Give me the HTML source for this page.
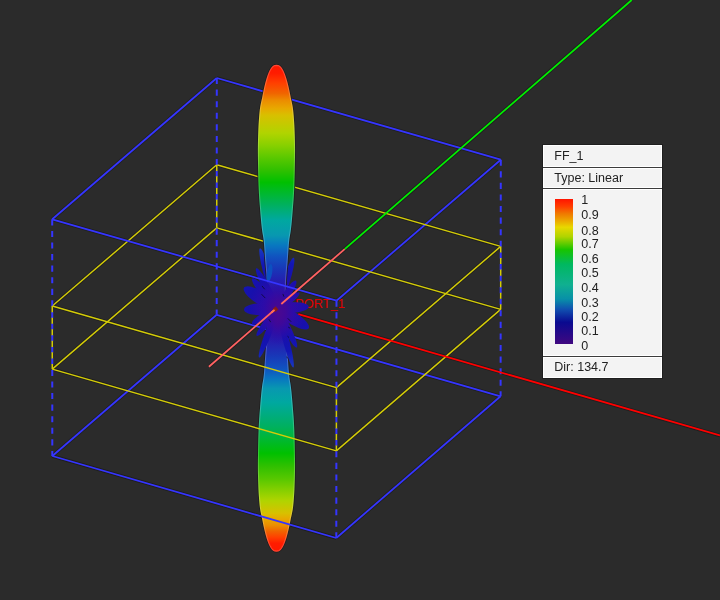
<!DOCTYPE html>
<html><head><meta charset="utf-8"><style>
html,body{margin:0;padding:0;width:720px;height:600px;overflow:hidden;background:#2b2b2b;}
body{position:relative;font-family:"Liberation Sans",sans-serif;}
#lg{position:absolute;left:0;top:0;width:720px;height:600px;will-change:transform;}
.ob{position:absolute;left:542px;top:144px;width:121px;height:235px;background:#1e1e1e;}
.sec{position:absolute;left:543px;width:117px;background:#f3f3f3;border:1px solid #ffffff;}
.sep{position:absolute;left:543px;width:119px;height:1px;background:#3c3c3c;}
.t{position:absolute;left:554.3px;font-size:12.5px;color:#222;line-height:14px;white-space:nowrap;}
.bar{position:absolute;left:554.5px;top:198.7px;width:18px;height:145.3px;background:linear-gradient(to bottom,#ff1400 0%,#ff3c00 5%,#f07800 10%,#eca800 15%,#e8d800 19.5%,#b0d400 26%,#18c400 35%,#00b860 45%,#10b090 59%,#0890a8 69%,#1050b0 76%,#0a0a90 85%,#400880 100%);}
.lb{position:absolute;left:581.3px;font-size:12.5px;color:#222;line-height:14px;}
</style></head><body>
<svg width="720" height="600" viewBox="0 0 720 600" style="position:absolute;left:0;top:0">
<defs>
<linearGradient id="gu" gradientUnits="userSpaceOnUse" x1="0" y1="64.95" x2="0" y2="308.25"><stop offset="0.0000" stop-color="#ff1800"/><stop offset="0.0341" stop-color="#ff1c00"/><stop offset="0.0752" stop-color="#ff4000"/><stop offset="0.1163" stop-color="#f06400"/><stop offset="0.1451" stop-color="#ec8c00"/><stop offset="0.1780" stop-color="#e8a800"/><stop offset="0.2067" stop-color="#d8c000"/><stop offset="0.2807" stop-color="#b0d400"/><stop offset="0.3300" stop-color="#88d000"/><stop offset="0.3835" stop-color="#58c800"/><stop offset="0.4328" stop-color="#30c000"/><stop offset="0.4821" stop-color="#00c000"/><stop offset="0.5767" stop-color="#00b060"/><stop offset="0.6383" stop-color="#00a8a0"/><stop offset="0.7000" stop-color="#0898b0"/><stop offset="0.7411" stop-color="#0878c0"/><stop offset="0.7863" stop-color="#1054c0"/><stop offset="0.8356" stop-color="#1838b8"/><stop offset="0.8849" stop-color="#2420b0"/><stop offset="0.9383" stop-color="#3210a0"/><stop offset="1.0000" stop-color="#4a0890"/></linearGradient>
<linearGradient id="gd" gradientUnits="userSpaceOnUse" x1="0" y1="551.55" x2="0" y2="308.25"><stop offset="0.0000" stop-color="#ff1800"/><stop offset="0.0341" stop-color="#ff1c00"/><stop offset="0.0588" stop-color="#ff4000"/><stop offset="0.0834" stop-color="#f06400"/><stop offset="0.1070" stop-color="#ec8c00"/><stop offset="0.1339" stop-color="#e8a800"/><stop offset="0.1574" stop-color="#d8c000"/><stop offset="0.2089" stop-color="#b0d400"/><stop offset="0.2493" stop-color="#88d000"/><stop offset="0.2979" stop-color="#58c800"/><stop offset="0.3502" stop-color="#30c000"/><stop offset="0.4040" stop-color="#00c000"/><stop offset="0.5150" stop-color="#00b060"/><stop offset="0.6130" stop-color="#00a8a0"/><stop offset="0.6701" stop-color="#0898b0"/><stop offset="0.7081" stop-color="#0878c0"/><stop offset="0.7499" stop-color="#1054c0"/><stop offset="0.8027" stop-color="#1838b8"/><stop offset="0.8570" stop-color="#2420b0"/><stop offset="0.9199" stop-color="#3210a0"/><stop offset="1.0000" stop-color="#4a0890"/></linearGradient>
<radialGradient id="pg" gradientUnits="userSpaceOnUse" cx="279" cy="307" r="60">
<stop offset="0" stop-color="#4a0890"/><stop offset="0.15" stop-color="#3a08a0"/><stop offset="0.3" stop-color="#2a0ca8"/><stop offset="0.5" stop-color="#1810ac"/><stop offset="0.75" stop-color="#1216b4"/><stop offset="1" stop-color="#1834c0"/>
</radialGradient>
<radialGradient id="pc" cx="0.5" cy="0.5" r="0.5">
<stop offset="0" stop-color="#4a0890" stop-opacity="1"/><stop offset="0.35" stop-color="#400898" stop-opacity="0.95"/><stop offset="0.7" stop-color="#2c0ca8" stop-opacity="0.6"/><stop offset="1" stop-color="#2010b0" stop-opacity="0"/>
</radialGradient>
</defs>
<rect width="720" height="600" fill="#2b2b2b"/>
<line x1="216.80" y1="78.00" x2="500.80" y2="159.70" stroke="#1e1e1e" stroke-width="3.4000000000000004"/><line x1="216.70" y1="314.80" x2="500.60" y2="396.30" stroke="#1e1e1e" stroke-width="3.4000000000000004"/><line x1="216.80" y1="78.00" x2="52.20" y2="219.30" stroke="#1e1e1e" stroke-width="3.4000000000000004"/><line x1="500.80" y1="159.70" x2="336.50" y2="300.70" stroke="#1e1e1e" stroke-width="3.4000000000000004"/><line x1="216.70" y1="314.80" x2="52.30" y2="456.00" stroke="#1e1e1e" stroke-width="3.4000000000000004"/><line x1="500.60" y1="396.30" x2="336.30" y2="538.00" stroke="#1e1e1e" stroke-width="3.4000000000000004"/><line x1="216.76" y1="164.79" x2="500.73" y2="246.41" stroke="#1e1e1e" stroke-width="3.05"/><line x1="216.74" y1="227.85" x2="500.67" y2="309.42" stroke="#1e1e1e" stroke-width="3.05"/><line x1="216.76" y1="164.79" x2="52.24" y2="306.05" stroke="#1e1e1e" stroke-width="3.05"/><line x1="500.73" y1="246.41" x2="336.43" y2="387.67" stroke="#1e1e1e" stroke-width="3.05"/><line x1="216.74" y1="227.85" x2="52.26" y2="369.08" stroke="#1e1e1e" stroke-width="3.05"/><line x1="500.67" y1="309.42" x2="336.37" y2="450.86" stroke="#1e1e1e" stroke-width="3.05"/><line x1="298.30" y1="314.20" x2="720.00" y2="435.50" stroke="#1e1e1e" stroke-width="3.4000000000000004"/><line x1="344.70" y1="249.10" x2="631.70" y2="0.00" stroke="#1e1e1e" stroke-width="3.4000000000000004"/><line x1="52.20" y1="219.30" x2="336.50" y2="300.70" stroke="#1e1e1e" stroke-width="3.4000000000000004"/><line x1="52.30" y1="456.00" x2="336.30" y2="538.00" stroke="#1e1e1e" stroke-width="3.4000000000000004"/><line x1="52.24" y1="306.05" x2="336.43" y2="387.67" stroke="#1e1e1e" stroke-width="3.05"/><line x1="52.26" y1="369.08" x2="336.37" y2="450.86" stroke="#1e1e1e" stroke-width="3.05"/><line x1="208.90" y1="366.70" x2="275.50" y2="309.00" stroke="#1e1e1e" stroke-width="3.4000000000000004"/><line x1="281.30" y1="304.00" x2="344.70" y2="249.10" stroke="#1e1e1e" stroke-width="3.4000000000000004"/><line x1="271.50" y1="312.50" x2="274.50" y2="309.90" stroke="#1e1e1e" stroke-width="3.4000000000000004"/><line x1="216.80" y1="78.00" x2="500.80" y2="159.70" stroke="#3535ff" stroke-width="1.8" /><line x1="216.70" y1="314.80" x2="500.60" y2="396.30" stroke="#3535ff" stroke-width="1.8" /><line x1="216.80" y1="78.00" x2="52.20" y2="219.30" stroke="#3535ff" stroke-width="1.8" /><line x1="500.80" y1="159.70" x2="336.50" y2="300.70" stroke="#3535ff" stroke-width="1.8" /><line x1="216.70" y1="314.80" x2="52.30" y2="456.00" stroke="#3535ff" stroke-width="1.8" /><line x1="500.60" y1="396.30" x2="336.30" y2="538.00" stroke="#3535ff" stroke-width="1.8" /><line x1="216.76" y1="164.79" x2="500.73" y2="246.41" stroke="#d4cc08" stroke-width="1.45" /><line x1="216.74" y1="227.85" x2="500.67" y2="309.42" stroke="#d4cc08" stroke-width="1.45" /><line x1="216.76" y1="164.79" x2="52.24" y2="306.05" stroke="#d4cc08" stroke-width="1.45" /><line x1="500.73" y1="246.41" x2="336.43" y2="387.67" stroke="#d4cc08" stroke-width="1.45" /><line x1="216.74" y1="227.85" x2="52.26" y2="369.08" stroke="#d4cc08" stroke-width="1.45" /><line x1="500.67" y1="309.42" x2="336.37" y2="450.86" stroke="#d4cc08" stroke-width="1.45" /><line x1="216.80" y1="78.00" x2="216.70" y2="314.80" stroke="#3535ff" stroke-width="2" stroke-dasharray="6.1 5.48"/><line x1="500.80" y1="159.70" x2="500.60" y2="396.30" stroke="#3535ff" stroke-width="2" stroke-dasharray="6.1 5.48"/><line x1="336.50" y1="300.70" x2="336.30" y2="538.00" stroke="#3535ff" stroke-width="2" stroke-dasharray="6.1 5.48"/><line x1="52.20" y1="219.30" x2="52.30" y2="456.00" stroke="#3535ff" stroke-width="2" stroke-dasharray="6.1 5.48"/><line x1="216.76" y1="164.79" x2="216.74" y2="227.85" stroke="#d4cc08" stroke-width="1.5" stroke-dasharray="6.1 5.48"/><line x1="500.73" y1="246.41" x2="500.67" y2="309.42" stroke="#d4cc08" stroke-width="1.5" stroke-dasharray="6.1 5.48"/><line x1="336.43" y1="387.67" x2="336.37" y2="450.86" stroke="#d4cc08" stroke-width="1.5" stroke-dasharray="6.1 5.48"/><line x1="52.24" y1="306.05" x2="52.26" y2="369.08" stroke="#d4cc08" stroke-width="1.5" stroke-dasharray="6.1 5.48"/><line x1="298.30" y1="314.20" x2="720.00" y2="435.50" stroke="#ff0000" stroke-width="1.8" /><line x1="344.70" y1="249.10" x2="631.70" y2="0.00" stroke="#00f000" stroke-width="1.8" />
<text x="295.3" y="308" font-family="Liberation Sans, sans-serif" font-size="12.8" fill="#e00000">PORT_1</text>
<path d="M260.00,248.30 L260.55,248.42 L261.24,249.05 L262.06,250.19 L263.00,251.80 L264.03,253.87 L265.14,256.37 L266.32,259.23 L267.54,262.43 L268.77,265.90 L270.01,269.58 L271.23,273.42 L272.40,277.34 L273.51,281.28 L274.54,285.17 L275.47,288.94 L276.29,292.53 L276.97,295.88 L277.52,298.93 L277.91,301.63 L278.15,303.94 L278.23,305.80 L278.15,307.20 L277.90,308.10 L277.50,308.50 L276.95,308.38 L276.26,307.75 L275.44,306.61 L274.50,305.00 L273.47,302.93 L272.36,300.43 L271.18,297.57 L269.96,294.37 L268.73,290.90 L267.49,287.22 L266.27,283.38 L265.10,279.46 L263.99,275.52 L262.96,271.63 L262.03,267.86 L261.21,264.27 L260.53,260.92 L259.98,257.87 L259.59,255.17 L259.35,252.86 L259.27,251.00 L259.35,249.60 L259.60,248.70Z" fill="url(#pg)"/><path d="M293.70,257.70 L294.08,258.06 L294.31,258.85 L294.40,260.05 L294.33,261.65 L294.11,263.61 L293.75,265.91 L293.25,268.51 L292.62,271.35 L291.87,274.39 L291.01,277.58 L290.06,280.87 L289.03,284.19 L287.94,287.50 L286.82,290.73 L285.67,293.83 L284.52,296.75 L283.39,299.43 L282.30,301.83 L281.26,303.92 L280.30,305.64 L279.43,306.99 L278.66,307.92 L278.02,308.43 L277.50,308.50 L277.12,308.14 L276.89,307.35 L276.80,306.15 L276.87,304.55 L277.09,302.59 L277.45,300.29 L277.95,297.69 L278.58,294.85 L279.33,291.81 L280.19,288.62 L281.14,285.33 L282.17,282.01 L283.26,278.70 L284.38,275.47 L285.53,272.37 L286.68,269.45 L287.81,266.77 L288.90,264.37 L289.94,262.28 L290.90,260.56 L291.77,259.21 L292.54,258.28 L293.18,257.77Z" fill="url(#pg)"/>
<path d="M276.45,64.85 L278.29,65.10 L278.92,65.35 L279.37,65.60 L279.75,65.85 L280.07,66.10 L280.36,66.35 L280.62,66.60 L280.87,66.85 L281.09,67.10 L281.30,67.35 L281.50,67.60 L281.68,67.85 L281.86,68.10 L282.03,68.35 L282.20,68.60 L282.36,68.85 L282.94,69.85 L283.45,70.85 L283.92,71.85 L284.35,72.85 L284.75,73.85 L285.13,74.85 L285.48,75.85 L285.82,76.85 L286.14,77.85 L286.45,78.85 L286.74,79.85 L287.02,80.85 L287.30,81.85 L287.56,82.85 L287.82,83.85 L288.06,84.85 L288.30,85.85 L288.54,86.85 L288.77,87.85 L288.99,88.85 L289.20,89.85 L289.42,90.85 L289.62,91.85 L289.83,92.85 L290.02,93.85 L290.22,94.85 L290.78,97.85 L291.46,100.85 L292.11,103.85 L292.68,106.85 L293.11,109.85 L293.41,112.85 L293.68,115.85 L293.92,118.85 L294.13,121.85 L294.31,124.85 L294.45,127.85 L294.57,130.85 L294.68,133.85 L294.79,136.85 L294.88,139.85 L294.96,142.85 L295.02,145.85 L295.05,148.85 L295.05,151.85 L295.03,154.85 L294.99,157.85 L294.94,160.85 L294.88,163.85 L294.82,166.85 L294.76,169.85 L294.70,172.85 L294.62,175.85 L294.55,178.85 L294.46,181.85 L294.36,184.85 L294.25,187.85 L294.12,190.85 L293.97,193.85 L293.79,196.85 L293.58,199.85 L293.35,202.85 L293.11,205.85 L292.86,208.85 L292.62,211.85 L292.37,214.85 L292.12,217.85 L291.85,220.85 L291.56,223.85 L291.24,226.85 L290.90,229.85 L290.46,232.85 L289.92,235.85 L289.42,238.85 L289.09,241.85 L288.82,244.85 L288.59,247.85 L288.39,250.85 L288.19,253.85 L288.00,256.85 L287.78,259.85 L287.54,262.85 L287.28,265.85 L287.01,268.85 L286.75,271.85 L286.50,274.85 L286.29,277.85 L286.12,280.85 L285.98,283.85 L285.87,286.85 L285.76,289.85 L285.66,292.85 L285.55,295.85 L285.42,298.85 L285.28,301.85 L285.12,304.85 L284.97,307.85 L284.95,308.25 L267.95,308.25 L267.93,307.85 L267.78,304.85 L267.62,301.85 L267.48,298.85 L267.35,295.85 L267.24,292.85 L267.14,289.85 L267.03,286.85 L266.92,283.85 L266.78,280.85 L266.61,277.85 L266.40,274.85 L266.15,271.85 L265.89,268.85 L265.62,265.85 L265.36,262.85 L265.12,259.85 L264.90,256.85 L264.71,253.85 L264.51,250.85 L264.31,247.85 L264.08,244.85 L263.81,241.85 L263.48,238.85 L262.98,235.85 L262.44,232.85 L262.00,229.85 L261.66,226.85 L261.34,223.85 L261.05,220.85 L260.78,217.85 L260.53,214.85 L260.28,211.85 L260.04,208.85 L259.79,205.85 L259.55,202.85 L259.32,199.85 L259.11,196.85 L258.93,193.85 L258.78,190.85 L258.65,187.85 L258.54,184.85 L258.44,181.85 L258.35,178.85 L258.28,175.85 L258.20,172.85 L258.14,169.85 L258.08,166.85 L258.02,163.85 L257.96,160.85 L257.91,157.85 L257.87,154.85 L257.85,151.85 L257.85,148.85 L257.88,145.85 L257.94,142.85 L258.02,139.85 L258.11,136.85 L258.22,133.85 L258.33,130.85 L258.45,127.85 L258.59,124.85 L258.77,121.85 L258.98,118.85 L259.22,115.85 L259.49,112.85 L259.79,109.85 L260.22,106.85 L260.79,103.85 L261.44,100.85 L262.12,97.85 L262.68,94.85 L262.88,93.85 L263.07,92.85 L263.28,91.85 L263.48,90.85 L263.70,89.85 L263.91,88.85 L264.13,87.85 L264.36,86.85 L264.60,85.85 L264.84,84.85 L265.08,83.85 L265.34,82.85 L265.60,81.85 L265.88,80.85 L266.16,79.85 L266.45,78.85 L266.76,77.85 L267.08,76.85 L267.42,75.85 L267.77,74.85 L268.15,73.85 L268.55,72.85 L268.98,71.85 L269.45,70.85 L269.96,69.85 L270.54,68.85 L270.70,68.60 L270.87,68.35 L271.04,68.10 L271.22,67.85 L271.40,67.60 L271.60,67.35 L271.81,67.10 L272.03,66.85 L272.28,66.60 L272.54,66.35 L272.83,66.10 L273.15,65.85 L273.53,65.60 L273.98,65.35 L274.61,65.10 L276.45,64.85Z" fill="url(#gu)" stroke="#1e1e1e" stroke-width="1.6" paint-order="stroke"/>
<path d="M276.45,551.65 L278.29,551.40 L278.92,551.15 L279.37,550.90 L279.75,550.65 L280.07,550.40 L280.36,550.15 L280.62,549.90 L280.87,549.65 L281.09,549.40 L281.30,549.15 L281.50,548.90 L281.68,548.65 L281.86,548.40 L282.03,548.15 L282.20,547.90 L282.36,547.65 L282.94,546.65 L283.45,545.65 L283.92,544.65 L284.35,543.65 L284.75,542.65 L285.13,541.65 L285.48,540.65 L285.82,539.65 L286.14,538.65 L286.45,537.65 L286.74,536.65 L287.02,535.65 L287.30,534.65 L287.56,533.65 L287.82,532.65 L288.06,531.65 L288.30,530.65 L288.54,529.65 L288.77,528.65 L288.99,527.65 L289.20,526.65 L289.42,525.65 L289.62,524.65 L289.83,523.65 L290.02,522.65 L290.22,521.65 L290.78,518.65 L291.46,515.65 L292.11,512.65 L292.68,509.65 L293.11,506.65 L293.41,503.65 L293.68,500.65 L293.92,497.65 L294.13,494.65 L294.31,491.65 L294.45,488.65 L294.57,485.65 L294.68,482.65 L294.79,479.65 L294.88,476.65 L294.96,473.65 L295.02,470.65 L295.05,467.65 L295.05,464.65 L295.03,461.65 L294.99,458.65 L294.94,455.65 L294.88,452.65 L294.82,449.65 L294.76,446.65 L294.70,443.65 L294.62,440.65 L294.55,437.65 L294.46,434.65 L294.36,431.65 L294.25,428.65 L294.12,425.65 L293.97,422.65 L293.79,419.65 L293.58,416.65 L293.35,413.65 L293.11,410.65 L292.86,407.65 L292.62,404.65 L292.37,401.65 L292.12,398.65 L291.85,395.65 L291.56,392.65 L291.24,389.65 L290.90,386.65 L290.46,383.65 L289.92,380.65 L289.42,377.65 L289.09,374.65 L288.82,371.65 L288.59,368.65 L288.39,365.65 L288.19,362.65 L288.00,359.65 L287.78,356.65 L287.54,353.65 L287.28,350.65 L287.01,347.65 L286.75,344.65 L286.50,341.65 L286.29,338.65 L286.12,335.65 L285.98,332.65 L285.87,329.65 L285.76,326.65 L285.66,323.65 L285.55,320.65 L285.42,317.65 L285.28,314.65 L285.12,311.65 L284.97,308.65 L284.95,308.25 L267.95,308.25 L267.93,308.65 L267.78,311.65 L267.62,314.65 L267.48,317.65 L267.35,320.65 L267.24,323.65 L267.14,326.65 L267.03,329.65 L266.92,332.65 L266.78,335.65 L266.61,338.65 L266.40,341.65 L266.15,344.65 L265.89,347.65 L265.62,350.65 L265.36,353.65 L265.12,356.65 L264.90,359.65 L264.71,362.65 L264.51,365.65 L264.31,368.65 L264.08,371.65 L263.81,374.65 L263.48,377.65 L262.98,380.65 L262.44,383.65 L262.00,386.65 L261.66,389.65 L261.34,392.65 L261.05,395.65 L260.78,398.65 L260.53,401.65 L260.28,404.65 L260.04,407.65 L259.79,410.65 L259.55,413.65 L259.32,416.65 L259.11,419.65 L258.93,422.65 L258.78,425.65 L258.65,428.65 L258.54,431.65 L258.44,434.65 L258.35,437.65 L258.28,440.65 L258.20,443.65 L258.14,446.65 L258.08,449.65 L258.02,452.65 L257.96,455.65 L257.91,458.65 L257.87,461.65 L257.85,464.65 L257.85,467.65 L257.88,470.65 L257.94,473.65 L258.02,476.65 L258.11,479.65 L258.22,482.65 L258.33,485.65 L258.45,488.65 L258.59,491.65 L258.77,494.65 L258.98,497.65 L259.22,500.65 L259.49,503.65 L259.79,506.65 L260.22,509.65 L260.79,512.65 L261.44,515.65 L262.12,518.65 L262.68,521.65 L262.88,522.65 L263.07,523.65 L263.28,524.65 L263.48,525.65 L263.70,526.65 L263.91,527.65 L264.13,528.65 L264.36,529.65 L264.60,530.65 L264.84,531.65 L265.08,532.65 L265.34,533.65 L265.60,534.65 L265.88,535.65 L266.16,536.65 L266.45,537.65 L266.76,538.65 L267.08,539.65 L267.42,540.65 L267.77,541.65 L268.15,542.65 L268.55,543.65 L268.98,544.65 L269.45,545.65 L269.96,546.65 L270.54,547.65 L270.70,547.90 L270.87,548.15 L271.04,548.40 L271.22,548.65 L271.40,548.90 L271.60,549.15 L271.81,549.40 L272.03,549.65 L272.28,549.90 L272.54,550.15 L272.83,550.40 L273.15,550.65 L273.53,550.90 L273.98,551.15 L274.61,551.40 L276.45,551.65Z" fill="url(#gd)" stroke="#1e1e1e" stroke-width="1.6" paint-order="stroke"/>
<clipPath id="lclip"><path d="M276.45,64.85 L278.29,65.10 L278.92,65.35 L279.37,65.60 L279.75,65.85 L280.07,66.10 L280.36,66.35 L280.62,66.60 L280.87,66.85 L281.09,67.10 L281.30,67.35 L281.50,67.60 L281.68,67.85 L281.86,68.10 L282.03,68.35 L282.20,68.60 L282.36,68.85 L282.94,69.85 L283.45,70.85 L283.92,71.85 L284.35,72.85 L284.75,73.85 L285.13,74.85 L285.48,75.85 L285.82,76.85 L286.14,77.85 L286.45,78.85 L286.74,79.85 L287.02,80.85 L287.30,81.85 L287.56,82.85 L287.82,83.85 L288.06,84.85 L288.30,85.85 L288.54,86.85 L288.77,87.85 L288.99,88.85 L289.20,89.85 L289.42,90.85 L289.62,91.85 L289.83,92.85 L290.02,93.85 L290.22,94.85 L290.78,97.85 L291.46,100.85 L292.11,103.85 L292.68,106.85 L293.11,109.85 L293.41,112.85 L293.68,115.85 L293.92,118.85 L294.13,121.85 L294.31,124.85 L294.45,127.85 L294.57,130.85 L294.68,133.85 L294.79,136.85 L294.88,139.85 L294.96,142.85 L295.02,145.85 L295.05,148.85 L295.05,151.85 L295.03,154.85 L294.99,157.85 L294.94,160.85 L294.88,163.85 L294.82,166.85 L294.76,169.85 L294.70,172.85 L294.62,175.85 L294.55,178.85 L294.46,181.85 L294.36,184.85 L294.25,187.85 L294.12,190.85 L293.97,193.85 L293.79,196.85 L293.58,199.85 L293.35,202.85 L293.11,205.85 L292.86,208.85 L292.62,211.85 L292.37,214.85 L292.12,217.85 L291.85,220.85 L291.56,223.85 L291.24,226.85 L290.90,229.85 L290.46,232.85 L289.92,235.85 L289.42,238.85 L289.09,241.85 L288.82,244.85 L288.59,247.85 L288.39,250.85 L288.19,253.85 L288.00,256.85 L287.78,259.85 L287.54,262.85 L287.28,265.85 L287.01,268.85 L286.75,271.85 L286.50,274.85 L286.29,277.85 L286.12,280.85 L285.98,283.85 L285.87,286.85 L285.76,289.85 L285.66,292.85 L285.55,295.85 L285.42,298.85 L285.28,301.85 L285.12,304.85 L284.97,307.85 L284.95,308.25 L267.95,308.25 L267.93,307.85 L267.78,304.85 L267.62,301.85 L267.48,298.85 L267.35,295.85 L267.24,292.85 L267.14,289.85 L267.03,286.85 L266.92,283.85 L266.78,280.85 L266.61,277.85 L266.40,274.85 L266.15,271.85 L265.89,268.85 L265.62,265.85 L265.36,262.85 L265.12,259.85 L264.90,256.85 L264.71,253.85 L264.51,250.85 L264.31,247.85 L264.08,244.85 L263.81,241.85 L263.48,238.85 L262.98,235.85 L262.44,232.85 L262.00,229.85 L261.66,226.85 L261.34,223.85 L261.05,220.85 L260.78,217.85 L260.53,214.85 L260.28,211.85 L260.04,208.85 L259.79,205.85 L259.55,202.85 L259.32,199.85 L259.11,196.85 L258.93,193.85 L258.78,190.85 L258.65,187.85 L258.54,184.85 L258.44,181.85 L258.35,178.85 L258.28,175.85 L258.20,172.85 L258.14,169.85 L258.08,166.85 L258.02,163.85 L257.96,160.85 L257.91,157.85 L257.87,154.85 L257.85,151.85 L257.85,148.85 L257.88,145.85 L257.94,142.85 L258.02,139.85 L258.11,136.85 L258.22,133.85 L258.33,130.85 L258.45,127.85 L258.59,124.85 L258.77,121.85 L258.98,118.85 L259.22,115.85 L259.49,112.85 L259.79,109.85 L260.22,106.85 L260.79,103.85 L261.44,100.85 L262.12,97.85 L262.68,94.85 L262.88,93.85 L263.07,92.85 L263.28,91.85 L263.48,90.85 L263.70,89.85 L263.91,88.85 L264.13,87.85 L264.36,86.85 L264.60,85.85 L264.84,84.85 L265.08,83.85 L265.34,82.85 L265.60,81.85 L265.88,80.85 L266.16,79.85 L266.45,78.85 L266.76,77.85 L267.08,76.85 L267.42,75.85 L267.77,74.85 L268.15,73.85 L268.55,72.85 L268.98,71.85 L269.45,70.85 L269.96,69.85 L270.54,68.85 L270.70,68.60 L270.87,68.35 L271.04,68.10 L271.22,67.85 L271.40,67.60 L271.60,67.35 L271.81,67.10 L272.03,66.85 L272.28,66.60 L272.54,66.35 L272.83,66.10 L273.15,65.85 L273.53,65.60 L273.98,65.35 L274.61,65.10 L276.45,64.85Z"/><path d="M276.45,551.65 L278.29,551.40 L278.92,551.15 L279.37,550.90 L279.75,550.65 L280.07,550.40 L280.36,550.15 L280.62,549.90 L280.87,549.65 L281.09,549.40 L281.30,549.15 L281.50,548.90 L281.68,548.65 L281.86,548.40 L282.03,548.15 L282.20,547.90 L282.36,547.65 L282.94,546.65 L283.45,545.65 L283.92,544.65 L284.35,543.65 L284.75,542.65 L285.13,541.65 L285.48,540.65 L285.82,539.65 L286.14,538.65 L286.45,537.65 L286.74,536.65 L287.02,535.65 L287.30,534.65 L287.56,533.65 L287.82,532.65 L288.06,531.65 L288.30,530.65 L288.54,529.65 L288.77,528.65 L288.99,527.65 L289.20,526.65 L289.42,525.65 L289.62,524.65 L289.83,523.65 L290.02,522.65 L290.22,521.65 L290.78,518.65 L291.46,515.65 L292.11,512.65 L292.68,509.65 L293.11,506.65 L293.41,503.65 L293.68,500.65 L293.92,497.65 L294.13,494.65 L294.31,491.65 L294.45,488.65 L294.57,485.65 L294.68,482.65 L294.79,479.65 L294.88,476.65 L294.96,473.65 L295.02,470.65 L295.05,467.65 L295.05,464.65 L295.03,461.65 L294.99,458.65 L294.94,455.65 L294.88,452.65 L294.82,449.65 L294.76,446.65 L294.70,443.65 L294.62,440.65 L294.55,437.65 L294.46,434.65 L294.36,431.65 L294.25,428.65 L294.12,425.65 L293.97,422.65 L293.79,419.65 L293.58,416.65 L293.35,413.65 L293.11,410.65 L292.86,407.65 L292.62,404.65 L292.37,401.65 L292.12,398.65 L291.85,395.65 L291.56,392.65 L291.24,389.65 L290.90,386.65 L290.46,383.65 L289.92,380.65 L289.42,377.65 L289.09,374.65 L288.82,371.65 L288.59,368.65 L288.39,365.65 L288.19,362.65 L288.00,359.65 L287.78,356.65 L287.54,353.65 L287.28,350.65 L287.01,347.65 L286.75,344.65 L286.50,341.65 L286.29,338.65 L286.12,335.65 L285.98,332.65 L285.87,329.65 L285.76,326.65 L285.66,323.65 L285.55,320.65 L285.42,317.65 L285.28,314.65 L285.12,311.65 L284.97,308.65 L284.95,308.25 L267.95,308.25 L267.93,308.65 L267.78,311.65 L267.62,314.65 L267.48,317.65 L267.35,320.65 L267.24,323.65 L267.14,326.65 L267.03,329.65 L266.92,332.65 L266.78,335.65 L266.61,338.65 L266.40,341.65 L266.15,344.65 L265.89,347.65 L265.62,350.65 L265.36,353.65 L265.12,356.65 L264.90,359.65 L264.71,362.65 L264.51,365.65 L264.31,368.65 L264.08,371.65 L263.81,374.65 L263.48,377.65 L262.98,380.65 L262.44,383.65 L262.00,386.65 L261.66,389.65 L261.34,392.65 L261.05,395.65 L260.78,398.65 L260.53,401.65 L260.28,404.65 L260.04,407.65 L259.79,410.65 L259.55,413.65 L259.32,416.65 L259.11,419.65 L258.93,422.65 L258.78,425.65 L258.65,428.65 L258.54,431.65 L258.44,434.65 L258.35,437.65 L258.28,440.65 L258.20,443.65 L258.14,446.65 L258.08,449.65 L258.02,452.65 L257.96,455.65 L257.91,458.65 L257.87,461.65 L257.85,464.65 L257.85,467.65 L257.88,470.65 L257.94,473.65 L258.02,476.65 L258.11,479.65 L258.22,482.65 L258.33,485.65 L258.45,488.65 L258.59,491.65 L258.77,494.65 L258.98,497.65 L259.22,500.65 L259.49,503.65 L259.79,506.65 L260.22,509.65 L260.79,512.65 L261.44,515.65 L262.12,518.65 L262.68,521.65 L262.88,522.65 L263.07,523.65 L263.28,524.65 L263.48,525.65 L263.70,526.65 L263.91,527.65 L264.13,528.65 L264.36,529.65 L264.60,530.65 L264.84,531.65 L265.08,532.65 L265.34,533.65 L265.60,534.65 L265.88,535.65 L266.16,536.65 L266.45,537.65 L266.76,538.65 L267.08,539.65 L267.42,540.65 L267.77,541.65 L268.15,542.65 L268.55,543.65 L268.98,544.65 L269.45,545.65 L269.96,546.65 L270.54,547.65 L270.70,547.90 L270.87,548.15 L271.04,548.40 L271.22,548.65 L271.40,548.90 L271.60,549.15 L271.81,549.40 L272.03,549.65 L272.28,549.90 L272.54,550.15 L272.83,550.40 L273.15,550.65 L273.53,550.90 L273.98,551.15 L274.61,551.40 L276.45,551.65Z"/></clipPath>
<g clip-path="url(#lclip)" fill="none" stroke="#ffffff" stroke-opacity="0.2" stroke-width="2.2"><path d="M276.45,64.85 L278.29,65.10 L278.92,65.35 L279.37,65.60 L279.75,65.85 L280.07,66.10 L280.36,66.35 L280.62,66.60 L280.87,66.85 L281.09,67.10 L281.30,67.35 L281.50,67.60 L281.68,67.85 L281.86,68.10 L282.03,68.35 L282.20,68.60 L282.36,68.85 L282.94,69.85 L283.45,70.85 L283.92,71.85 L284.35,72.85 L284.75,73.85 L285.13,74.85 L285.48,75.85 L285.82,76.85 L286.14,77.85 L286.45,78.85 L286.74,79.85 L287.02,80.85 L287.30,81.85 L287.56,82.85 L287.82,83.85 L288.06,84.85 L288.30,85.85 L288.54,86.85 L288.77,87.85 L288.99,88.85 L289.20,89.85 L289.42,90.85 L289.62,91.85 L289.83,92.85 L290.02,93.85 L290.22,94.85 L290.78,97.85 L291.46,100.85 L292.11,103.85 L292.68,106.85 L293.11,109.85 L293.41,112.85 L293.68,115.85 L293.92,118.85 L294.13,121.85 L294.31,124.85 L294.45,127.85 L294.57,130.85 L294.68,133.85 L294.79,136.85 L294.88,139.85 L294.96,142.85 L295.02,145.85 L295.05,148.85 L295.05,151.85 L295.03,154.85 L294.99,157.85 L294.94,160.85 L294.88,163.85 L294.82,166.85 L294.76,169.85 L294.70,172.85 L294.62,175.85 L294.55,178.85 L294.46,181.85 L294.36,184.85 L294.25,187.85 L294.12,190.85 L293.97,193.85 L293.79,196.85 L293.58,199.85 L293.35,202.85 L293.11,205.85 L292.86,208.85 L292.62,211.85 L292.37,214.85 L292.12,217.85 L291.85,220.85 L291.56,223.85 L291.24,226.85 L290.90,229.85 L290.46,232.85 L289.92,235.85 L289.42,238.85 L289.09,241.85 L288.82,244.85 L288.59,247.85 L288.39,250.85 L288.19,253.85 L288.00,256.85 L287.78,259.85 L287.54,262.85 L287.28,265.85 L287.01,268.85 L286.75,271.85 L286.50,274.85 L286.29,277.85 L286.12,280.85 L285.98,283.85 L285.87,286.85 L285.76,289.85 L285.66,292.85 L285.55,295.85 L285.42,298.85 L285.28,301.85 L285.12,304.85 L284.97,307.85 L284.95,308.25 L267.95,308.25 L267.93,307.85 L267.78,304.85 L267.62,301.85 L267.48,298.85 L267.35,295.85 L267.24,292.85 L267.14,289.85 L267.03,286.85 L266.92,283.85 L266.78,280.85 L266.61,277.85 L266.40,274.85 L266.15,271.85 L265.89,268.85 L265.62,265.85 L265.36,262.85 L265.12,259.85 L264.90,256.85 L264.71,253.85 L264.51,250.85 L264.31,247.85 L264.08,244.85 L263.81,241.85 L263.48,238.85 L262.98,235.85 L262.44,232.85 L262.00,229.85 L261.66,226.85 L261.34,223.85 L261.05,220.85 L260.78,217.85 L260.53,214.85 L260.28,211.85 L260.04,208.85 L259.79,205.85 L259.55,202.85 L259.32,199.85 L259.11,196.85 L258.93,193.85 L258.78,190.85 L258.65,187.85 L258.54,184.85 L258.44,181.85 L258.35,178.85 L258.28,175.85 L258.20,172.85 L258.14,169.85 L258.08,166.85 L258.02,163.85 L257.96,160.85 L257.91,157.85 L257.87,154.85 L257.85,151.85 L257.85,148.85 L257.88,145.85 L257.94,142.85 L258.02,139.85 L258.11,136.85 L258.22,133.85 L258.33,130.85 L258.45,127.85 L258.59,124.85 L258.77,121.85 L258.98,118.85 L259.22,115.85 L259.49,112.85 L259.79,109.85 L260.22,106.85 L260.79,103.85 L261.44,100.85 L262.12,97.85 L262.68,94.85 L262.88,93.85 L263.07,92.85 L263.28,91.85 L263.48,90.85 L263.70,89.85 L263.91,88.85 L264.13,87.85 L264.36,86.85 L264.60,85.85 L264.84,84.85 L265.08,83.85 L265.34,82.85 L265.60,81.85 L265.88,80.85 L266.16,79.85 L266.45,78.85 L266.76,77.85 L267.08,76.85 L267.42,75.85 L267.77,74.85 L268.15,73.85 L268.55,72.85 L268.98,71.85 L269.45,70.85 L269.96,69.85 L270.54,68.85 L270.70,68.60 L270.87,68.35 L271.04,68.10 L271.22,67.85 L271.40,67.60 L271.60,67.35 L271.81,67.10 L272.03,66.85 L272.28,66.60 L272.54,66.35 L272.83,66.10 L273.15,65.85 L273.53,65.60 L273.98,65.35 L274.61,65.10 L276.45,64.85Z"/><path d="M276.45,551.65 L278.29,551.40 L278.92,551.15 L279.37,550.90 L279.75,550.65 L280.07,550.40 L280.36,550.15 L280.62,549.90 L280.87,549.65 L281.09,549.40 L281.30,549.15 L281.50,548.90 L281.68,548.65 L281.86,548.40 L282.03,548.15 L282.20,547.90 L282.36,547.65 L282.94,546.65 L283.45,545.65 L283.92,544.65 L284.35,543.65 L284.75,542.65 L285.13,541.65 L285.48,540.65 L285.82,539.65 L286.14,538.65 L286.45,537.65 L286.74,536.65 L287.02,535.65 L287.30,534.65 L287.56,533.65 L287.82,532.65 L288.06,531.65 L288.30,530.65 L288.54,529.65 L288.77,528.65 L288.99,527.65 L289.20,526.65 L289.42,525.65 L289.62,524.65 L289.83,523.65 L290.02,522.65 L290.22,521.65 L290.78,518.65 L291.46,515.65 L292.11,512.65 L292.68,509.65 L293.11,506.65 L293.41,503.65 L293.68,500.65 L293.92,497.65 L294.13,494.65 L294.31,491.65 L294.45,488.65 L294.57,485.65 L294.68,482.65 L294.79,479.65 L294.88,476.65 L294.96,473.65 L295.02,470.65 L295.05,467.65 L295.05,464.65 L295.03,461.65 L294.99,458.65 L294.94,455.65 L294.88,452.65 L294.82,449.65 L294.76,446.65 L294.70,443.65 L294.62,440.65 L294.55,437.65 L294.46,434.65 L294.36,431.65 L294.25,428.65 L294.12,425.65 L293.97,422.65 L293.79,419.65 L293.58,416.65 L293.35,413.65 L293.11,410.65 L292.86,407.65 L292.62,404.65 L292.37,401.65 L292.12,398.65 L291.85,395.65 L291.56,392.65 L291.24,389.65 L290.90,386.65 L290.46,383.65 L289.92,380.65 L289.42,377.65 L289.09,374.65 L288.82,371.65 L288.59,368.65 L288.39,365.65 L288.19,362.65 L288.00,359.65 L287.78,356.65 L287.54,353.65 L287.28,350.65 L287.01,347.65 L286.75,344.65 L286.50,341.65 L286.29,338.65 L286.12,335.65 L285.98,332.65 L285.87,329.65 L285.76,326.65 L285.66,323.65 L285.55,320.65 L285.42,317.65 L285.28,314.65 L285.12,311.65 L284.97,308.65 L284.95,308.25 L267.95,308.25 L267.93,308.65 L267.78,311.65 L267.62,314.65 L267.48,317.65 L267.35,320.65 L267.24,323.65 L267.14,326.65 L267.03,329.65 L266.92,332.65 L266.78,335.65 L266.61,338.65 L266.40,341.65 L266.15,344.65 L265.89,347.65 L265.62,350.65 L265.36,353.65 L265.12,356.65 L264.90,359.65 L264.71,362.65 L264.51,365.65 L264.31,368.65 L264.08,371.65 L263.81,374.65 L263.48,377.65 L262.98,380.65 L262.44,383.65 L262.00,386.65 L261.66,389.65 L261.34,392.65 L261.05,395.65 L260.78,398.65 L260.53,401.65 L260.28,404.65 L260.04,407.65 L259.79,410.65 L259.55,413.65 L259.32,416.65 L259.11,419.65 L258.93,422.65 L258.78,425.65 L258.65,428.65 L258.54,431.65 L258.44,434.65 L258.35,437.65 L258.28,440.65 L258.20,443.65 L258.14,446.65 L258.08,449.65 L258.02,452.65 L257.96,455.65 L257.91,458.65 L257.87,461.65 L257.85,464.65 L257.85,467.65 L257.88,470.65 L257.94,473.65 L258.02,476.65 L258.11,479.65 L258.22,482.65 L258.33,485.65 L258.45,488.65 L258.59,491.65 L258.77,494.65 L258.98,497.65 L259.22,500.65 L259.49,503.65 L259.79,506.65 L260.22,509.65 L260.79,512.65 L261.44,515.65 L262.12,518.65 L262.68,521.65 L262.88,522.65 L263.07,523.65 L263.28,524.65 L263.48,525.65 L263.70,526.65 L263.91,527.65 L264.13,528.65 L264.36,529.65 L264.60,530.65 L264.84,531.65 L265.08,532.65 L265.34,533.65 L265.60,534.65 L265.88,535.65 L266.16,536.65 L266.45,537.65 L266.76,538.65 L267.08,539.65 L267.42,540.65 L267.77,541.65 L268.15,542.65 L268.55,543.65 L268.98,544.65 L269.45,545.65 L269.96,546.65 L270.54,547.65 L270.70,547.90 L270.87,548.15 L271.04,548.40 L271.22,548.65 L271.40,548.90 L271.60,549.15 L271.81,549.40 L272.03,549.65 L272.28,549.90 L272.54,550.15 L272.83,550.40 L273.15,550.65 L273.53,550.90 L273.98,551.15 L274.61,551.40 L276.45,551.65Z"/></g>
<path d="M256.30,268.30 L256.81,268.25 L257.49,268.55 L258.33,269.19 L259.31,270.15 L260.43,271.43 L261.66,273.00 L262.97,274.83 L264.36,276.90 L265.79,279.16 L267.23,281.58 L268.67,284.11 L270.08,286.72 L271.44,289.36 L272.72,291.98 L273.90,294.54 L274.96,297.00 L275.88,299.30 L276.65,301.43 L277.25,303.32 L277.67,304.97 L277.91,306.33 L277.96,307.38 L277.82,308.11 L277.50,308.50 L276.99,308.55 L276.31,308.25 L275.47,307.61 L274.49,306.65 L273.37,305.37 L272.14,303.80 L270.83,301.97 L269.44,299.90 L268.01,297.64 L266.57,295.22 L265.13,292.69 L263.72,290.08 L262.36,287.44 L261.08,284.82 L259.90,282.26 L258.84,279.80 L257.92,277.50 L257.15,275.37 L256.55,273.48 L256.13,271.83 L255.89,270.47 L255.84,269.42 L255.98,268.69Z" fill="url(#pg)"/><path d="M296.00,280.70 L296.31,281.08 L296.46,281.69 L296.44,282.52 L296.26,283.56 L295.91,284.79 L295.41,286.18 L294.76,287.72 L293.97,289.38 L293.06,291.12 L292.04,292.93 L290.93,294.76 L289.75,296.59 L288.51,298.39 L287.25,300.12 L285.98,301.76 L284.72,303.28 L283.50,304.64 L282.33,305.84 L281.24,306.84 L280.24,307.63 L279.35,308.21 L278.59,308.54 L277.97,308.64 L277.50,308.50 L277.19,308.12 L277.04,307.51 L277.06,306.68 L277.24,305.64 L277.59,304.41 L278.09,303.02 L278.74,301.48 L279.53,299.82 L280.44,298.08 L281.46,296.27 L282.57,294.44 L283.75,292.61 L284.99,290.81 L286.25,289.08 L287.52,287.44 L288.78,285.92 L290.00,284.56 L291.17,283.36 L292.26,282.36 L293.26,281.57 L294.15,280.99 L294.91,280.66 L295.53,280.56Z" fill="url(#pg)"/><path d="M252.30,278.50 L252.81,278.29 L253.52,278.35 L254.43,278.66 L255.52,279.22 L256.77,280.03 L258.16,281.07 L259.66,282.33 L261.25,283.77 L262.91,285.38 L264.60,287.13 L266.29,288.99 L267.96,290.93 L269.58,292.91 L271.12,294.90 L272.55,296.86 L273.85,298.77 L275.00,300.59 L275.98,302.29 L276.76,303.83 L277.34,305.20 L277.71,306.37 L277.86,307.32 L277.79,308.04 L277.50,308.50 L276.99,308.71 L276.28,308.65 L275.37,308.34 L274.28,307.78 L273.03,306.97 L271.64,305.93 L270.14,304.67 L268.55,303.23 L266.89,301.62 L265.20,299.87 L263.51,298.01 L261.84,296.07 L260.22,294.09 L258.68,292.10 L257.25,290.14 L255.95,288.23 L254.80,286.41 L253.82,284.71 L253.04,283.17 L252.46,281.80 L252.09,280.63 L251.94,279.68 L252.01,278.96Z" fill="url(#pg)"/><path d="M244.00,287.70 L244.59,287.07 L245.46,286.63 L246.59,286.38 L247.96,286.33 L249.55,286.49 L251.33,286.84 L253.27,287.39 L255.34,288.12 L257.51,289.02 L259.73,290.07 L261.96,291.27 L264.18,292.58 L266.34,293.98 L268.40,295.46 L270.33,296.98 L272.09,298.52 L273.67,300.05 L275.02,301.55 L276.13,302.99 L276.97,304.35 L277.54,305.60 L277.82,306.72 L277.80,307.69 L277.50,308.50 L276.91,309.13 L276.04,309.57 L274.91,309.82 L273.54,309.87 L271.95,309.71 L270.17,309.36 L268.23,308.81 L266.16,308.08 L263.99,307.18 L261.77,306.13 L259.54,304.93 L257.32,303.62 L255.16,302.22 L253.10,300.74 L251.17,299.22 L249.41,297.68 L247.83,296.15 L246.48,294.65 L245.37,293.21 L244.53,291.85 L243.96,290.60 L243.68,289.48 L243.70,288.51Z" fill="url(#pg)"/><path d="M244.00,309.70 L244.12,308.91 L244.52,308.13 L245.19,307.36 L246.14,306.62 L247.33,305.93 L248.75,305.28 L250.38,304.71 L252.19,304.21 L254.14,303.79 L256.21,303.46 L258.35,303.23 L260.54,303.10 L262.72,303.08 L264.88,303.15 L266.96,303.33 L268.94,303.61 L270.78,303.98 L272.44,304.44 L273.91,304.97 L275.15,305.58 L276.14,306.25 L276.87,306.97 L277.33,307.72 L277.50,308.50 L277.38,309.29 L276.98,310.07 L276.31,310.84 L275.36,311.58 L274.17,312.27 L272.75,312.92 L271.12,313.49 L269.31,313.99 L267.36,314.41 L265.29,314.74 L263.15,314.97 L260.96,315.10 L258.78,315.12 L256.62,315.05 L254.54,314.87 L252.56,314.59 L250.72,314.22 L249.06,313.76 L247.59,313.23 L246.35,312.62 L245.36,311.95 L244.63,311.23 L244.17,310.48Z" fill="url(#pg)"/><path d="M308.70,306.60 L308.61,307.29 L308.25,307.98 L307.63,308.66 L306.77,309.32 L305.67,309.96 L304.35,310.55 L302.85,311.09 L301.17,311.57 L299.36,311.98 L297.44,312.32 L295.45,312.57 L293.42,312.74 L291.38,312.82 L289.37,312.81 L287.42,312.71 L285.57,312.52 L283.85,312.25 L282.29,311.89 L280.92,311.46 L279.75,310.97 L278.81,310.41 L278.11,309.81 L277.67,309.17 L277.50,308.50 L277.59,307.81 L277.95,307.12 L278.57,306.44 L279.43,305.78 L280.53,305.14 L281.85,304.55 L283.35,304.01 L285.03,303.53 L286.84,303.12 L288.76,302.78 L290.75,302.53 L292.78,302.36 L294.82,302.28 L296.83,302.29 L298.78,302.39 L300.63,302.58 L302.35,302.85 L303.91,303.21 L305.28,303.64 L306.45,304.13 L307.39,304.69 L308.09,305.29 L308.53,305.93Z" fill="url(#pg)"/><path d="M299.30,292.70 L299.47,293.14 L299.46,293.70 L299.26,294.39 L298.87,295.18 L298.30,296.06 L297.56,297.02 L296.67,298.04 L295.63,299.10 L294.47,300.20 L293.21,301.29 L291.86,302.38 L290.45,303.43 L289.01,304.44 L287.56,305.38 L286.13,306.24 L284.73,307.00 L283.39,307.66 L282.14,308.19 L281.00,308.59 L279.99,308.86 L279.12,308.98 L278.40,308.96 L277.86,308.80 L277.50,308.50 L277.33,308.06 L277.34,307.50 L277.54,306.81 L277.93,306.02 L278.50,305.14 L279.24,304.18 L280.13,303.16 L281.17,302.10 L282.33,301.00 L283.59,299.91 L284.94,298.82 L286.35,297.77 L287.79,296.76 L289.24,295.82 L290.67,294.96 L292.07,294.20 L293.41,293.54 L294.66,293.01 L295.80,292.61 L296.81,292.34 L297.68,292.22 L298.40,292.24 L298.94,292.40Z" fill="url(#pg)"/><path d="M308.70,328.30 L308.15,328.88 L307.34,329.27 L306.28,329.49 L305.00,329.51 L303.52,329.34 L301.86,328.98 L300.05,328.45 L298.12,327.74 L296.10,326.87 L294.03,325.86 L291.95,324.71 L289.89,323.47 L287.88,322.13 L285.96,320.73 L284.16,319.29 L282.52,317.84 L281.05,316.39 L279.80,314.98 L278.77,313.63 L277.98,312.36 L277.46,311.19 L277.20,310.15 L277.21,309.25 L277.50,308.50 L278.05,307.92 L278.86,307.53 L279.92,307.31 L281.20,307.29 L282.68,307.46 L284.34,307.82 L286.15,308.35 L288.08,309.06 L290.10,309.93 L292.17,310.94 L294.25,312.09 L296.31,313.33 L298.32,314.67 L300.24,316.07 L302.04,317.51 L303.68,318.96 L305.15,320.41 L306.40,321.82 L307.43,323.17 L308.22,324.44 L308.74,325.61 L309.00,326.65 L308.99,327.55Z" fill="url(#pg)"/><path d="M296.70,347.50 L296.21,347.53 L295.56,347.24 L294.77,346.61 L293.84,345.66 L292.80,344.41 L291.67,342.88 L290.45,341.10 L289.18,339.09 L287.87,336.89 L286.55,334.54 L285.24,332.08 L283.96,329.55 L282.73,326.99 L281.58,324.45 L280.53,321.97 L279.58,319.59 L278.76,317.36 L278.09,315.30 L277.57,313.47 L277.22,311.89 L277.03,310.58 L277.01,309.56 L277.17,308.87 L277.50,308.50 L277.99,308.47 L278.64,308.76 L279.43,309.39 L280.36,310.34 L281.40,311.59 L282.53,313.12 L283.75,314.90 L285.02,316.91 L286.33,319.11 L287.65,321.46 L288.96,323.92 L290.24,326.45 L291.47,329.01 L292.62,331.55 L293.67,334.03 L294.62,336.41 L295.44,338.64 L296.11,340.70 L296.63,342.53 L296.98,344.11 L297.17,345.42 L297.19,346.44 L297.03,347.13Z" fill="url(#pg)"/><path d="M252.00,324.00 L251.84,323.49 L251.90,322.85 L252.18,322.10 L252.67,321.25 L253.37,320.32 L254.27,319.31 L255.34,318.26 L256.58,317.16 L257.95,316.06 L259.44,314.95 L261.03,313.87 L262.67,312.83 L264.35,311.85 L266.04,310.94 L267.71,310.13 L269.33,309.41 L270.86,308.82 L272.30,308.35 L273.60,308.02 L274.75,307.83 L275.73,307.78 L276.53,307.88 L277.12,308.12 L277.50,308.50 L277.66,309.01 L277.60,309.65 L277.32,310.40 L276.83,311.25 L276.13,312.18 L275.23,313.19 L274.16,314.24 L272.92,315.34 L271.55,316.44 L270.06,317.55 L268.47,318.63 L266.83,319.67 L265.15,320.65 L263.46,321.56 L261.79,322.37 L260.17,323.09 L258.64,323.68 L257.20,324.15 L255.90,324.48 L254.75,324.67 L253.77,324.72 L252.97,324.62 L252.38,324.38Z" fill="url(#pg)"/><path d="M256.70,335.80 L256.46,335.43 L256.40,334.83 L256.52,334.02 L256.82,333.00 L257.30,331.80 L257.95,330.43 L258.75,328.92 L259.70,327.30 L260.77,325.58 L261.95,323.81 L263.22,322.01 L264.55,320.21 L265.93,318.45 L267.33,316.74 L268.73,315.13 L270.10,313.65 L271.41,312.30 L272.65,311.13 L273.80,310.14 L274.83,309.36 L275.73,308.80 L276.49,308.46 L277.08,308.36 L277.50,308.50 L277.74,308.87 L277.80,309.47 L277.68,310.28 L277.38,311.30 L276.90,312.50 L276.25,313.87 L275.45,315.38 L274.50,317.00 L273.43,318.72 L272.25,320.49 L270.98,322.29 L269.65,324.09 L268.27,325.85 L266.87,327.56 L265.47,329.17 L264.10,330.65 L262.79,332.00 L261.55,333.17 L260.40,334.16 L259.37,334.94 L258.47,335.50 L257.71,335.84 L257.12,335.94Z" fill="url(#pg)"/><path d="M259.20,357.50 L258.89,357.14 L258.74,356.38 L258.75,355.21 L258.93,353.66 L259.27,351.76 L259.76,349.53 L260.40,347.03 L261.18,344.28 L262.08,341.34 L263.09,338.26 L264.18,335.09 L265.35,331.88 L266.57,328.69 L267.82,325.58 L269.08,322.59 L270.33,319.78 L271.54,317.20 L272.70,314.88 L273.78,312.88 L274.78,311.22 L275.66,309.94 L276.41,309.05 L277.03,308.56 L277.50,308.50 L277.81,308.86 L277.96,309.62 L277.95,310.79 L277.77,312.34 L277.43,314.24 L276.94,316.47 L276.30,318.97 L275.52,321.72 L274.62,324.66 L273.61,327.74 L272.52,330.91 L271.35,334.12 L270.13,337.31 L268.88,340.42 L267.62,343.41 L266.37,346.22 L265.16,348.80 L264.00,351.12 L262.92,353.12 L261.92,354.78 L261.04,356.06 L260.29,356.95 L259.67,357.44Z" fill="url(#pg)"/><path d="M293.30,367.50 L292.83,367.36 L292.23,366.71 L291.52,365.57 L290.70,363.96 L289.79,361.91 L288.80,359.44 L287.76,356.62 L286.67,353.47 L285.57,350.05 L284.46,346.43 L283.37,342.67 L282.31,338.83 L281.30,334.97 L280.37,331.16 L279.52,327.48 L278.77,323.97 L278.14,320.70 L277.63,317.73 L277.25,315.10 L277.01,312.87 L276.92,311.06 L276.97,309.72 L277.16,308.86 L277.50,308.50 L277.97,308.64 L278.57,309.29 L279.28,310.43 L280.10,312.04 L281.01,314.09 L282.00,316.56 L283.04,319.38 L284.13,322.53 L285.23,325.95 L286.34,329.57 L287.43,333.33 L288.49,337.17 L289.50,341.03 L290.43,344.84 L291.28,348.52 L292.03,352.03 L292.66,355.30 L293.17,358.27 L293.55,360.90 L293.79,363.13 L293.88,364.94 L293.83,366.28 L293.64,367.14Z" fill="url(#pg)"/>
<clipPath id="pclip"><path d="M276.45,64.85 L278.29,65.10 L278.92,65.35 L279.37,65.60 L279.75,65.85 L280.07,66.10 L280.36,66.35 L280.62,66.60 L280.87,66.85 L281.09,67.10 L281.30,67.35 L281.50,67.60 L281.68,67.85 L281.86,68.10 L282.03,68.35 L282.20,68.60 L282.36,68.85 L282.94,69.85 L283.45,70.85 L283.92,71.85 L284.35,72.85 L284.75,73.85 L285.13,74.85 L285.48,75.85 L285.82,76.85 L286.14,77.85 L286.45,78.85 L286.74,79.85 L287.02,80.85 L287.30,81.85 L287.56,82.85 L287.82,83.85 L288.06,84.85 L288.30,85.85 L288.54,86.85 L288.77,87.85 L288.99,88.85 L289.20,89.85 L289.42,90.85 L289.62,91.85 L289.83,92.85 L290.02,93.85 L290.22,94.85 L290.78,97.85 L291.46,100.85 L292.11,103.85 L292.68,106.85 L293.11,109.85 L293.41,112.85 L293.68,115.85 L293.92,118.85 L294.13,121.85 L294.31,124.85 L294.45,127.85 L294.57,130.85 L294.68,133.85 L294.79,136.85 L294.88,139.85 L294.96,142.85 L295.02,145.85 L295.05,148.85 L295.05,151.85 L295.03,154.85 L294.99,157.85 L294.94,160.85 L294.88,163.85 L294.82,166.85 L294.76,169.85 L294.70,172.85 L294.62,175.85 L294.55,178.85 L294.46,181.85 L294.36,184.85 L294.25,187.85 L294.12,190.85 L293.97,193.85 L293.79,196.85 L293.58,199.85 L293.35,202.85 L293.11,205.85 L292.86,208.85 L292.62,211.85 L292.37,214.85 L292.12,217.85 L291.85,220.85 L291.56,223.85 L291.24,226.85 L290.90,229.85 L290.46,232.85 L289.92,235.85 L289.42,238.85 L289.09,241.85 L288.82,244.85 L288.59,247.85 L288.39,250.85 L288.19,253.85 L288.00,256.85 L287.78,259.85 L287.54,262.85 L287.28,265.85 L287.01,268.85 L286.75,271.85 L286.50,274.85 L286.29,277.85 L286.12,280.85 L285.98,283.85 L285.87,286.85 L285.76,289.85 L285.66,292.85 L285.55,295.85 L285.42,298.85 L285.28,301.85 L285.12,304.85 L284.97,307.85 L284.95,308.25 L267.95,308.25 L267.93,307.85 L267.78,304.85 L267.62,301.85 L267.48,298.85 L267.35,295.85 L267.24,292.85 L267.14,289.85 L267.03,286.85 L266.92,283.85 L266.78,280.85 L266.61,277.85 L266.40,274.85 L266.15,271.85 L265.89,268.85 L265.62,265.85 L265.36,262.85 L265.12,259.85 L264.90,256.85 L264.71,253.85 L264.51,250.85 L264.31,247.85 L264.08,244.85 L263.81,241.85 L263.48,238.85 L262.98,235.85 L262.44,232.85 L262.00,229.85 L261.66,226.85 L261.34,223.85 L261.05,220.85 L260.78,217.85 L260.53,214.85 L260.28,211.85 L260.04,208.85 L259.79,205.85 L259.55,202.85 L259.32,199.85 L259.11,196.85 L258.93,193.85 L258.78,190.85 L258.65,187.85 L258.54,184.85 L258.44,181.85 L258.35,178.85 L258.28,175.85 L258.20,172.85 L258.14,169.85 L258.08,166.85 L258.02,163.85 L257.96,160.85 L257.91,157.85 L257.87,154.85 L257.85,151.85 L257.85,148.85 L257.88,145.85 L257.94,142.85 L258.02,139.85 L258.11,136.85 L258.22,133.85 L258.33,130.85 L258.45,127.85 L258.59,124.85 L258.77,121.85 L258.98,118.85 L259.22,115.85 L259.49,112.85 L259.79,109.85 L260.22,106.85 L260.79,103.85 L261.44,100.85 L262.12,97.85 L262.68,94.85 L262.88,93.85 L263.07,92.85 L263.28,91.85 L263.48,90.85 L263.70,89.85 L263.91,88.85 L264.13,87.85 L264.36,86.85 L264.60,85.85 L264.84,84.85 L265.08,83.85 L265.34,82.85 L265.60,81.85 L265.88,80.85 L266.16,79.85 L266.45,78.85 L266.76,77.85 L267.08,76.85 L267.42,75.85 L267.77,74.85 L268.15,73.85 L268.55,72.85 L268.98,71.85 L269.45,70.85 L269.96,69.85 L270.54,68.85 L270.70,68.60 L270.87,68.35 L271.04,68.10 L271.22,67.85 L271.40,67.60 L271.60,67.35 L271.81,67.10 L272.03,66.85 L272.28,66.60 L272.54,66.35 L272.83,66.10 L273.15,65.85 L273.53,65.60 L273.98,65.35 L274.61,65.10 L276.45,64.85Z"/><path d="M276.45,551.65 L278.29,551.40 L278.92,551.15 L279.37,550.90 L279.75,550.65 L280.07,550.40 L280.36,550.15 L280.62,549.90 L280.87,549.65 L281.09,549.40 L281.30,549.15 L281.50,548.90 L281.68,548.65 L281.86,548.40 L282.03,548.15 L282.20,547.90 L282.36,547.65 L282.94,546.65 L283.45,545.65 L283.92,544.65 L284.35,543.65 L284.75,542.65 L285.13,541.65 L285.48,540.65 L285.82,539.65 L286.14,538.65 L286.45,537.65 L286.74,536.65 L287.02,535.65 L287.30,534.65 L287.56,533.65 L287.82,532.65 L288.06,531.65 L288.30,530.65 L288.54,529.65 L288.77,528.65 L288.99,527.65 L289.20,526.65 L289.42,525.65 L289.62,524.65 L289.83,523.65 L290.02,522.65 L290.22,521.65 L290.78,518.65 L291.46,515.65 L292.11,512.65 L292.68,509.65 L293.11,506.65 L293.41,503.65 L293.68,500.65 L293.92,497.65 L294.13,494.65 L294.31,491.65 L294.45,488.65 L294.57,485.65 L294.68,482.65 L294.79,479.65 L294.88,476.65 L294.96,473.65 L295.02,470.65 L295.05,467.65 L295.05,464.65 L295.03,461.65 L294.99,458.65 L294.94,455.65 L294.88,452.65 L294.82,449.65 L294.76,446.65 L294.70,443.65 L294.62,440.65 L294.55,437.65 L294.46,434.65 L294.36,431.65 L294.25,428.65 L294.12,425.65 L293.97,422.65 L293.79,419.65 L293.58,416.65 L293.35,413.65 L293.11,410.65 L292.86,407.65 L292.62,404.65 L292.37,401.65 L292.12,398.65 L291.85,395.65 L291.56,392.65 L291.24,389.65 L290.90,386.65 L290.46,383.65 L289.92,380.65 L289.42,377.65 L289.09,374.65 L288.82,371.65 L288.59,368.65 L288.39,365.65 L288.19,362.65 L288.00,359.65 L287.78,356.65 L287.54,353.65 L287.28,350.65 L287.01,347.65 L286.75,344.65 L286.50,341.65 L286.29,338.65 L286.12,335.65 L285.98,332.65 L285.87,329.65 L285.76,326.65 L285.66,323.65 L285.55,320.65 L285.42,317.65 L285.28,314.65 L285.12,311.65 L284.97,308.65 L284.95,308.25 L267.95,308.25 L267.93,308.65 L267.78,311.65 L267.62,314.65 L267.48,317.65 L267.35,320.65 L267.24,323.65 L267.14,326.65 L267.03,329.65 L266.92,332.65 L266.78,335.65 L266.61,338.65 L266.40,341.65 L266.15,344.65 L265.89,347.65 L265.62,350.65 L265.36,353.65 L265.12,356.65 L264.90,359.65 L264.71,362.65 L264.51,365.65 L264.31,368.65 L264.08,371.65 L263.81,374.65 L263.48,377.65 L262.98,380.65 L262.44,383.65 L262.00,386.65 L261.66,389.65 L261.34,392.65 L261.05,395.65 L260.78,398.65 L260.53,401.65 L260.28,404.65 L260.04,407.65 L259.79,410.65 L259.55,413.65 L259.32,416.65 L259.11,419.65 L258.93,422.65 L258.78,425.65 L258.65,428.65 L258.54,431.65 L258.44,434.65 L258.35,437.65 L258.28,440.65 L258.20,443.65 L258.14,446.65 L258.08,449.65 L258.02,452.65 L257.96,455.65 L257.91,458.65 L257.87,461.65 L257.85,464.65 L257.85,467.65 L257.88,470.65 L257.94,473.65 L258.02,476.65 L258.11,479.65 L258.22,482.65 L258.33,485.65 L258.45,488.65 L258.59,491.65 L258.77,494.65 L258.98,497.65 L259.22,500.65 L259.49,503.65 L259.79,506.65 L260.22,509.65 L260.79,512.65 L261.44,515.65 L262.12,518.65 L262.68,521.65 L262.88,522.65 L263.07,523.65 L263.28,524.65 L263.48,525.65 L263.70,526.65 L263.91,527.65 L264.13,528.65 L264.36,529.65 L264.60,530.65 L264.84,531.65 L265.08,532.65 L265.34,533.65 L265.60,534.65 L265.88,535.65 L266.16,536.65 L266.45,537.65 L266.76,538.65 L267.08,539.65 L267.42,540.65 L267.77,541.65 L268.15,542.65 L268.55,543.65 L268.98,544.65 L269.45,545.65 L269.96,546.65 L270.54,547.65 L270.70,547.90 L270.87,548.15 L271.04,548.40 L271.22,548.65 L271.40,548.90 L271.60,549.15 L271.81,549.40 L272.03,549.65 L272.28,549.90 L272.54,550.15 L272.83,550.40 L273.15,550.65 L273.53,550.90 L273.98,551.15 L274.61,551.40 L276.45,551.65Z"/><path d="M256.30,268.30 L256.81,268.25 L257.49,268.55 L258.33,269.19 L259.31,270.15 L260.43,271.43 L261.66,273.00 L262.97,274.83 L264.36,276.90 L265.79,279.16 L267.23,281.58 L268.67,284.11 L270.08,286.72 L271.44,289.36 L272.72,291.98 L273.90,294.54 L274.96,297.00 L275.88,299.30 L276.65,301.43 L277.25,303.32 L277.67,304.97 L277.91,306.33 L277.96,307.38 L277.82,308.11 L277.50,308.50 L276.99,308.55 L276.31,308.25 L275.47,307.61 L274.49,306.65 L273.37,305.37 L272.14,303.80 L270.83,301.97 L269.44,299.90 L268.01,297.64 L266.57,295.22 L265.13,292.69 L263.72,290.08 L262.36,287.44 L261.08,284.82 L259.90,282.26 L258.84,279.80 L257.92,277.50 L257.15,275.37 L256.55,273.48 L256.13,271.83 L255.89,270.47 L255.84,269.42 L255.98,268.69Z" fill="url(#pg)"/><path d="M296.00,280.70 L296.31,281.08 L296.46,281.69 L296.44,282.52 L296.26,283.56 L295.91,284.79 L295.41,286.18 L294.76,287.72 L293.97,289.38 L293.06,291.12 L292.04,292.93 L290.93,294.76 L289.75,296.59 L288.51,298.39 L287.25,300.12 L285.98,301.76 L284.72,303.28 L283.50,304.64 L282.33,305.84 L281.24,306.84 L280.24,307.63 L279.35,308.21 L278.59,308.54 L277.97,308.64 L277.50,308.50 L277.19,308.12 L277.04,307.51 L277.06,306.68 L277.24,305.64 L277.59,304.41 L278.09,303.02 L278.74,301.48 L279.53,299.82 L280.44,298.08 L281.46,296.27 L282.57,294.44 L283.75,292.61 L284.99,290.81 L286.25,289.08 L287.52,287.44 L288.78,285.92 L290.00,284.56 L291.17,283.36 L292.26,282.36 L293.26,281.57 L294.15,280.99 L294.91,280.66 L295.53,280.56Z" fill="url(#pg)"/><path d="M252.30,278.50 L252.81,278.29 L253.52,278.35 L254.43,278.66 L255.52,279.22 L256.77,280.03 L258.16,281.07 L259.66,282.33 L261.25,283.77 L262.91,285.38 L264.60,287.13 L266.29,288.99 L267.96,290.93 L269.58,292.91 L271.12,294.90 L272.55,296.86 L273.85,298.77 L275.00,300.59 L275.98,302.29 L276.76,303.83 L277.34,305.20 L277.71,306.37 L277.86,307.32 L277.79,308.04 L277.50,308.50 L276.99,308.71 L276.28,308.65 L275.37,308.34 L274.28,307.78 L273.03,306.97 L271.64,305.93 L270.14,304.67 L268.55,303.23 L266.89,301.62 L265.20,299.87 L263.51,298.01 L261.84,296.07 L260.22,294.09 L258.68,292.10 L257.25,290.14 L255.95,288.23 L254.80,286.41 L253.82,284.71 L253.04,283.17 L252.46,281.80 L252.09,280.63 L251.94,279.68 L252.01,278.96Z" fill="url(#pg)"/><path d="M244.00,287.70 L244.59,287.07 L245.46,286.63 L246.59,286.38 L247.96,286.33 L249.55,286.49 L251.33,286.84 L253.27,287.39 L255.34,288.12 L257.51,289.02 L259.73,290.07 L261.96,291.27 L264.18,292.58 L266.34,293.98 L268.40,295.46 L270.33,296.98 L272.09,298.52 L273.67,300.05 L275.02,301.55 L276.13,302.99 L276.97,304.35 L277.54,305.60 L277.82,306.72 L277.80,307.69 L277.50,308.50 L276.91,309.13 L276.04,309.57 L274.91,309.82 L273.54,309.87 L271.95,309.71 L270.17,309.36 L268.23,308.81 L266.16,308.08 L263.99,307.18 L261.77,306.13 L259.54,304.93 L257.32,303.62 L255.16,302.22 L253.10,300.74 L251.17,299.22 L249.41,297.68 L247.83,296.15 L246.48,294.65 L245.37,293.21 L244.53,291.85 L243.96,290.60 L243.68,289.48 L243.70,288.51Z" fill="url(#pg)"/><path d="M244.00,309.70 L244.12,308.91 L244.52,308.13 L245.19,307.36 L246.14,306.62 L247.33,305.93 L248.75,305.28 L250.38,304.71 L252.19,304.21 L254.14,303.79 L256.21,303.46 L258.35,303.23 L260.54,303.10 L262.72,303.08 L264.88,303.15 L266.96,303.33 L268.94,303.61 L270.78,303.98 L272.44,304.44 L273.91,304.97 L275.15,305.58 L276.14,306.25 L276.87,306.97 L277.33,307.72 L277.50,308.50 L277.38,309.29 L276.98,310.07 L276.31,310.84 L275.36,311.58 L274.17,312.27 L272.75,312.92 L271.12,313.49 L269.31,313.99 L267.36,314.41 L265.29,314.74 L263.15,314.97 L260.96,315.10 L258.78,315.12 L256.62,315.05 L254.54,314.87 L252.56,314.59 L250.72,314.22 L249.06,313.76 L247.59,313.23 L246.35,312.62 L245.36,311.95 L244.63,311.23 L244.17,310.48Z" fill="url(#pg)"/><path d="M308.70,306.60 L308.61,307.29 L308.25,307.98 L307.63,308.66 L306.77,309.32 L305.67,309.96 L304.35,310.55 L302.85,311.09 L301.17,311.57 L299.36,311.98 L297.44,312.32 L295.45,312.57 L293.42,312.74 L291.38,312.82 L289.37,312.81 L287.42,312.71 L285.57,312.52 L283.85,312.25 L282.29,311.89 L280.92,311.46 L279.75,310.97 L278.81,310.41 L278.11,309.81 L277.67,309.17 L277.50,308.50 L277.59,307.81 L277.95,307.12 L278.57,306.44 L279.43,305.78 L280.53,305.14 L281.85,304.55 L283.35,304.01 L285.03,303.53 L286.84,303.12 L288.76,302.78 L290.75,302.53 L292.78,302.36 L294.82,302.28 L296.83,302.29 L298.78,302.39 L300.63,302.58 L302.35,302.85 L303.91,303.21 L305.28,303.64 L306.45,304.13 L307.39,304.69 L308.09,305.29 L308.53,305.93Z" fill="url(#pg)"/><path d="M299.30,292.70 L299.47,293.14 L299.46,293.70 L299.26,294.39 L298.87,295.18 L298.30,296.06 L297.56,297.02 L296.67,298.04 L295.63,299.10 L294.47,300.20 L293.21,301.29 L291.86,302.38 L290.45,303.43 L289.01,304.44 L287.56,305.38 L286.13,306.24 L284.73,307.00 L283.39,307.66 L282.14,308.19 L281.00,308.59 L279.99,308.86 L279.12,308.98 L278.40,308.96 L277.86,308.80 L277.50,308.50 L277.33,308.06 L277.34,307.50 L277.54,306.81 L277.93,306.02 L278.50,305.14 L279.24,304.18 L280.13,303.16 L281.17,302.10 L282.33,301.00 L283.59,299.91 L284.94,298.82 L286.35,297.77 L287.79,296.76 L289.24,295.82 L290.67,294.96 L292.07,294.20 L293.41,293.54 L294.66,293.01 L295.80,292.61 L296.81,292.34 L297.68,292.22 L298.40,292.24 L298.94,292.40Z" fill="url(#pg)"/><path d="M308.70,328.30 L308.15,328.88 L307.34,329.27 L306.28,329.49 L305.00,329.51 L303.52,329.34 L301.86,328.98 L300.05,328.45 L298.12,327.74 L296.10,326.87 L294.03,325.86 L291.95,324.71 L289.89,323.47 L287.88,322.13 L285.96,320.73 L284.16,319.29 L282.52,317.84 L281.05,316.39 L279.80,314.98 L278.77,313.63 L277.98,312.36 L277.46,311.19 L277.20,310.15 L277.21,309.25 L277.50,308.50 L278.05,307.92 L278.86,307.53 L279.92,307.31 L281.20,307.29 L282.68,307.46 L284.34,307.82 L286.15,308.35 L288.08,309.06 L290.10,309.93 L292.17,310.94 L294.25,312.09 L296.31,313.33 L298.32,314.67 L300.24,316.07 L302.04,317.51 L303.68,318.96 L305.15,320.41 L306.40,321.82 L307.43,323.17 L308.22,324.44 L308.74,325.61 L309.00,326.65 L308.99,327.55Z" fill="url(#pg)"/><path d="M296.70,347.50 L296.21,347.53 L295.56,347.24 L294.77,346.61 L293.84,345.66 L292.80,344.41 L291.67,342.88 L290.45,341.10 L289.18,339.09 L287.87,336.89 L286.55,334.54 L285.24,332.08 L283.96,329.55 L282.73,326.99 L281.58,324.45 L280.53,321.97 L279.58,319.59 L278.76,317.36 L278.09,315.30 L277.57,313.47 L277.22,311.89 L277.03,310.58 L277.01,309.56 L277.17,308.87 L277.50,308.50 L277.99,308.47 L278.64,308.76 L279.43,309.39 L280.36,310.34 L281.40,311.59 L282.53,313.12 L283.75,314.90 L285.02,316.91 L286.33,319.11 L287.65,321.46 L288.96,323.92 L290.24,326.45 L291.47,329.01 L292.62,331.55 L293.67,334.03 L294.62,336.41 L295.44,338.64 L296.11,340.70 L296.63,342.53 L296.98,344.11 L297.17,345.42 L297.19,346.44 L297.03,347.13Z" fill="url(#pg)"/><path d="M252.00,324.00 L251.84,323.49 L251.90,322.85 L252.18,322.10 L252.67,321.25 L253.37,320.32 L254.27,319.31 L255.34,318.26 L256.58,317.16 L257.95,316.06 L259.44,314.95 L261.03,313.87 L262.67,312.83 L264.35,311.85 L266.04,310.94 L267.71,310.13 L269.33,309.41 L270.86,308.82 L272.30,308.35 L273.60,308.02 L274.75,307.83 L275.73,307.78 L276.53,307.88 L277.12,308.12 L277.50,308.50 L277.66,309.01 L277.60,309.65 L277.32,310.40 L276.83,311.25 L276.13,312.18 L275.23,313.19 L274.16,314.24 L272.92,315.34 L271.55,316.44 L270.06,317.55 L268.47,318.63 L266.83,319.67 L265.15,320.65 L263.46,321.56 L261.79,322.37 L260.17,323.09 L258.64,323.68 L257.20,324.15 L255.90,324.48 L254.75,324.67 L253.77,324.72 L252.97,324.62 L252.38,324.38Z" fill="url(#pg)"/><path d="M256.70,335.80 L256.46,335.43 L256.40,334.83 L256.52,334.02 L256.82,333.00 L257.30,331.80 L257.95,330.43 L258.75,328.92 L259.70,327.30 L260.77,325.58 L261.95,323.81 L263.22,322.01 L264.55,320.21 L265.93,318.45 L267.33,316.74 L268.73,315.13 L270.10,313.65 L271.41,312.30 L272.65,311.13 L273.80,310.14 L274.83,309.36 L275.73,308.80 L276.49,308.46 L277.08,308.36 L277.50,308.50 L277.74,308.87 L277.80,309.47 L277.68,310.28 L277.38,311.30 L276.90,312.50 L276.25,313.87 L275.45,315.38 L274.50,317.00 L273.43,318.72 L272.25,320.49 L270.98,322.29 L269.65,324.09 L268.27,325.85 L266.87,327.56 L265.47,329.17 L264.10,330.65 L262.79,332.00 L261.55,333.17 L260.40,334.16 L259.37,334.94 L258.47,335.50 L257.71,335.84 L257.12,335.94Z" fill="url(#pg)"/><path d="M259.20,357.50 L258.89,357.14 L258.74,356.38 L258.75,355.21 L258.93,353.66 L259.27,351.76 L259.76,349.53 L260.40,347.03 L261.18,344.28 L262.08,341.34 L263.09,338.26 L264.18,335.09 L265.35,331.88 L266.57,328.69 L267.82,325.58 L269.08,322.59 L270.33,319.78 L271.54,317.20 L272.70,314.88 L273.78,312.88 L274.78,311.22 L275.66,309.94 L276.41,309.05 L277.03,308.56 L277.50,308.50 L277.81,308.86 L277.96,309.62 L277.95,310.79 L277.77,312.34 L277.43,314.24 L276.94,316.47 L276.30,318.97 L275.52,321.72 L274.62,324.66 L273.61,327.74 L272.52,330.91 L271.35,334.12 L270.13,337.31 L268.88,340.42 L267.62,343.41 L266.37,346.22 L265.16,348.80 L264.00,351.12 L262.92,353.12 L261.92,354.78 L261.04,356.06 L260.29,356.95 L259.67,357.44Z" fill="url(#pg)"/><path d="M293.30,367.50 L292.83,367.36 L292.23,366.71 L291.52,365.57 L290.70,363.96 L289.79,361.91 L288.80,359.44 L287.76,356.62 L286.67,353.47 L285.57,350.05 L284.46,346.43 L283.37,342.67 L282.31,338.83 L281.30,334.97 L280.37,331.16 L279.52,327.48 L278.77,323.97 L278.14,320.70 L277.63,317.73 L277.25,315.10 L277.01,312.87 L276.92,311.06 L276.97,309.72 L277.16,308.86 L277.50,308.50 L277.97,308.64 L278.57,309.29 L279.28,310.43 L280.10,312.04 L281.01,314.09 L282.00,316.56 L283.04,319.38 L284.13,322.53 L285.23,325.95 L286.34,329.57 L287.43,333.33 L288.49,337.17 L289.50,341.03 L290.43,344.84 L291.28,348.52 L292.03,352.03 L292.66,355.30 L293.17,358.27 L293.55,360.90 L293.79,363.13 L293.88,364.94 L293.83,366.28 L293.64,367.14Z" fill="url(#pg)"/><path d="M260.00,248.30 L260.55,248.42 L261.24,249.05 L262.06,250.19 L263.00,251.80 L264.03,253.87 L265.14,256.37 L266.32,259.23 L267.54,262.43 L268.77,265.90 L270.01,269.58 L271.23,273.42 L272.40,277.34 L273.51,281.28 L274.54,285.17 L275.47,288.94 L276.29,292.53 L276.97,295.88 L277.52,298.93 L277.91,301.63 L278.15,303.94 L278.23,305.80 L278.15,307.20 L277.90,308.10 L277.50,308.50 L276.95,308.38 L276.26,307.75 L275.44,306.61 L274.50,305.00 L273.47,302.93 L272.36,300.43 L271.18,297.57 L269.96,294.37 L268.73,290.90 L267.49,287.22 L266.27,283.38 L265.10,279.46 L263.99,275.52 L262.96,271.63 L262.03,267.86 L261.21,264.27 L260.53,260.92 L259.98,257.87 L259.59,255.17 L259.35,252.86 L259.27,251.00 L259.35,249.60 L259.60,248.70Z" fill="url(#pg)"/><path d="M293.70,257.70 L294.08,258.06 L294.31,258.85 L294.40,260.05 L294.33,261.65 L294.11,263.61 L293.75,265.91 L293.25,268.51 L292.62,271.35 L291.87,274.39 L291.01,277.58 L290.06,280.87 L289.03,284.19 L287.94,287.50 L286.82,290.73 L285.67,293.83 L284.52,296.75 L283.39,299.43 L282.30,301.83 L281.26,303.92 L280.30,305.64 L279.43,306.99 L278.66,307.92 L278.02,308.43 L277.50,308.50 L277.12,308.14 L276.89,307.35 L276.80,306.15 L276.87,304.55 L277.09,302.59 L277.45,300.29 L277.95,297.69 L278.58,294.85 L279.33,291.81 L280.19,288.62 L281.14,285.33 L282.17,282.01 L283.26,278.70 L284.38,275.47 L285.53,272.37 L286.68,269.45 L287.81,266.77 L288.90,264.37 L289.94,262.28 L290.90,260.56 L291.77,259.21 L292.54,258.28 L293.18,257.77Z" fill="url(#pg)"/></clipPath>
<ellipse cx="278.5" cy="313" rx="21" ry="32" fill="url(#pc)" clip-path="url(#pclip)"/>
<ellipse cx="269.5" cy="273" rx="9" ry="2.6" transform="rotate(-80 269.5 273)" fill="#0c50c0"/>
<g stroke="#0c0c28" stroke-width="1.0" stroke-linecap="round" opacity="0.75">
<line x1="262.3" y1="286.3" x2="264.5" y2="289"/>
<line x1="261.8" y1="294.5" x2="265" y2="297.8"/>
<line x1="283" y1="294.3" x2="283.8" y2="296.3"/>
<line x1="296.9" y1="291.5" x2="297.8" y2="292.2"/>
<line x1="288" y1="318.6" x2="290.8" y2="321.4"/>
<line x1="288.5" y1="327.2" x2="289.8" y2="328"/>
<line x1="269" y1="319.5" x2="270.5" y2="321.8"/>
<line x1="287.8" y1="336.5" x2="288.6" y2="337.2"/>
<line x1="287" y1="357" x2="287.3" y2="358"/>
</g>
<line x1="52.20" y1="219.30" x2="336.50" y2="300.70" stroke="#3535ff" stroke-width="1.8" /><line x1="52.30" y1="456.00" x2="336.30" y2="538.00" stroke="#3535ff" stroke-width="1.8" /><line x1="52.24" y1="306.05" x2="336.43" y2="387.67" stroke="#d4cc08" stroke-width="1.45" /><line x1="52.26" y1="369.08" x2="336.37" y2="450.86" stroke="#d4cc08" stroke-width="1.45" /><line x1="208.90" y1="366.70" x2="275.50" y2="309.00" stroke="#ff6262" stroke-width="1.8" /><line x1="281.30" y1="304.00" x2="344.70" y2="249.10" stroke="#ff6262" stroke-width="1.8" /><rect x="273.5" y="307.2" width="4.2" height="4.2" fill="#8c1c10" opacity="0.9" transform="rotate(-40 275.5 309.5)"/><line x1="271.50" y1="312.50" x2="274.50" y2="309.90" stroke="#ff7050" stroke-width="1.8" />
</svg>
<div id="lg">
<div class="ob"></div>
<div class="sec" style="top:145px;height:20px"></div>
<div class="sep" style="top:167px"></div>
<div class="sec" style="top:168px;height:18px"></div>
<div class="sep" style="top:188px"></div>
<div class="sec" style="top:189px;height:165px"></div>
<div class="sep" style="top:356px"></div>
<div class="sec" style="top:357px;height:19px"></div>
<div class="t" style="top:148.8px">FF_1</div>
<div class="t" style="top:171px">Type: Linear</div>
<div class="bar"></div>
<div class="lb" style="top:193.3px">1</div><div class="lb" style="top:207.9px">0.9</div><div class="lb" style="top:223.7px">0.8</div><div class="lb" style="top:237.1px">0.7</div><div class="lb" style="top:251.5px">0.6</div><div class="lb" style="top:266.2px">0.5</div><div class="lb" style="top:280.8px">0.4</div><div class="lb" style="top:296.2px">0.3</div><div class="lb" style="top:309.5px">0.2</div><div class="lb" style="top:324.2px">0.1</div><div class="lb" style="top:338.6px">0</div>
<div class="t" style="top:360px">Dir: 134.7</div>
</div>
</body></html>
